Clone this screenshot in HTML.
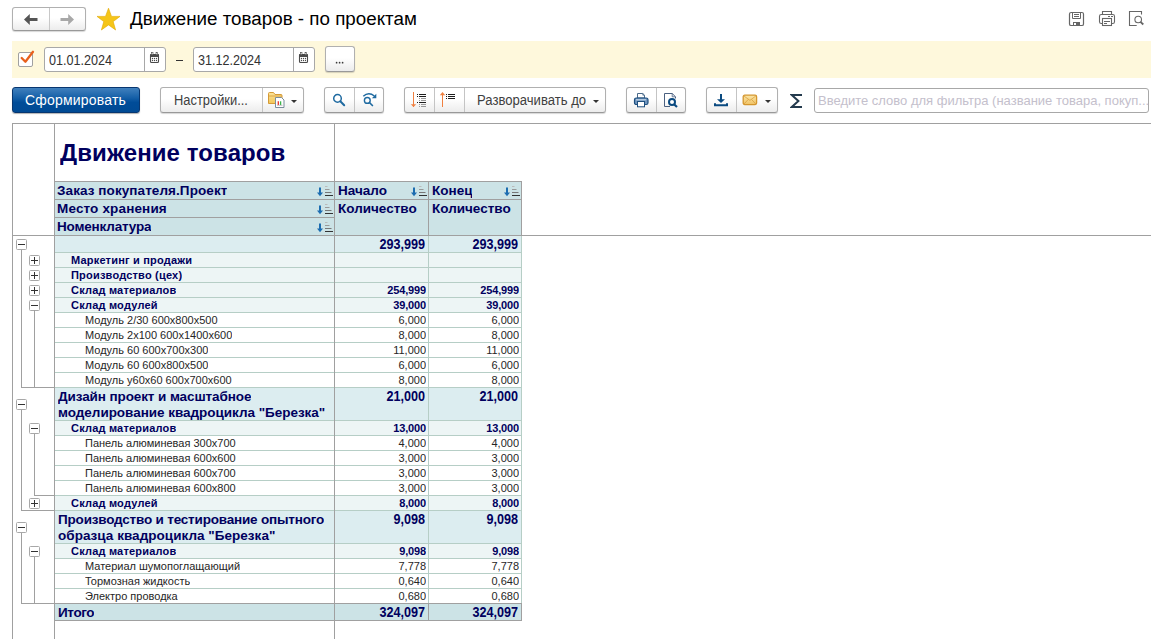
<!DOCTYPE html>
<html><head><meta charset="utf-8">
<style>
*{box-sizing:border-box;margin:0;padding:0}
html,body{width:1151px;height:639px;overflow:hidden;background:#fff;font-family:"Liberation Sans",sans-serif;position:relative}
.a{position:absolute}
.btn{position:absolute;border:1px solid #b0b0b0;border-bottom-color:#999;border-radius:3px;background:linear-gradient(#fff 0%,#fff 45%,#ececec 100%);box-shadow:0 1px 1px rgba(0,0,0,.16)}
.sep{position:absolute;top:0;bottom:0;width:1px;background:#c4c4c4}
.t13{font-size:13px;color:#404040;white-space:nowrap}
.dd{position:absolute;width:0;height:0;border-left:3px solid transparent;border-right:3px solid transparent;border-top:3px solid #333}
/* spreadsheet */
.hl{position:absolute;height:1px}
.vl{position:absolute;width:1px}
.g{background:#a0a0a0}
.gr{background:#b6cec6}
.cell{position:absolute;white-space:nowrap;overflow:hidden}
.hb{font-size:13.5px;font-weight:bold;color:#00005e}
.hb.num{font-size:14.5px;transform:scaleX(.87);transform-origin:100% 50%}
.l1{font-size:11px;font-weight:bold;color:#00005e;letter-spacing:.2px}
.l1.num{letter-spacing:-.15px}
.dt{font-size:11px;color:#262626}
.num{text-align:right}
.box{position:absolute;width:11px;height:11px;border:1px solid #a8a8a8;border-radius:1.5px;background:#fff}
.box:before{content:"";position:absolute;left:1px;top:4px;width:7px;height:1px;background:#333}
.box.p:after{content:"";position:absolute;left:4px;top:1px;width:1px;height:7px;background:#333}
.sorti{position:absolute;width:17px;height:10px}
</style></head><body>

<!-- ===== top bar ===== -->
<div class="btn" style="left:12px;top:7px;width:74px;height:24px"></div>
<div class="a" style="left:49px;top:8px;width:1px;height:22px;background:#c8c8c8"></div>
<svg class="a" style="left:24px;top:14px" width="14" height="11" viewBox="0 0 14 11"><path d="M0 5.5 L5.8 0 V4 H13.5 V7 H5.8 V11 Z" fill="#555"/></svg>
<svg class="a" style="left:60px;top:14px" width="14" height="11" viewBox="0 0 14 11"><path d="M14 5.5 L8.2 0 V4 H0.5 V7 H8.2 V11 Z" fill="#a8a8a8"/></svg>
<svg class="a" style="left:96px;top:7px" width="25" height="24" viewBox="0 0 25 24"><path d="M12.5 1.2 L15.5 9.4 L24 9.4 L17.2 14.6 L19.6 23 L12.5 17.9 L5.4 23 L7.8 14.6 L1 9.4 L9.5 9.4 Z" fill="#f5c518" stroke="#e0a800" stroke-width=".6"/></svg>
<div class="a" style="left:130px;top:7px;font-size:18.8px;color:#000;white-space:nowrap;line-height:24px">Движение товаров - по проектам</div>

<!-- right icons -->
<svg class="a" style="left:1068px;top:11px" width="17" height="16" viewBox="0 0 17 16" fill="none" stroke="#666" stroke-width="1.2">
 <rect x="1.5" y="1.5" width="14" height="13" rx="1.6"/><path d="M4.5 1.5V7.5H12.5V1.5" stroke-width="1"/><path d="M6 3.5H11M6 5.5H11" stroke-width="1"/><rect x="5" y="11" width="7" height="4" fill="#666" stroke="none"/><rect x="6" y="12" width="2" height="2" fill="#fff" stroke="none"/>
</svg>
<svg class="a" style="left:1098px;top:10px" width="18" height="17" viewBox="0 0 18 17" fill="none" stroke="#666" stroke-width="1.1">
 <path d="M4.5 4.5V1.5H13.5V4.5"/><rect x="1.5" y="4.5" width="15" height="9" rx="1.8"/><rect x="4.5" y="8.5" width="9" height="7" fill="#fff"/><path d="M6 11.5H12M6 13.5H9M10 6.5H12M13 6.5H15" stroke-width="1"/>
</svg>
<svg class="a" style="left:1128px;top:10px" width="18" height="17" viewBox="0 0 18 17" fill="none" stroke="#666" stroke-width="1.1">
 <path d="M8.7 15.5H1.5V1.5H13.5V4.5"/><circle cx="10.2" cy="9.5" r="3.3"/><path d="M12.5 11.8L15.3 14.5" stroke-width="1.8"/>
</svg>

<!-- ===== yellow filter band ===== -->
<div class="a" style="left:12px;top:41px;width:1139px;height:37px;background:#fef8dc"></div>
<div class="a" style="left:18px;top:52px;width:15px;height:15px;border:1px solid #a0a0a0;border-radius:2px;background:#fff"></div>
<svg class="a" style="left:19px;top:50px" width="16" height="14" viewBox="0 0 16 14"><path d="M2.7 8 L6.4 11.8 L14 1.8" fill="none" stroke="#e8601c" stroke-width="2.3" stroke-linecap="round" stroke-linejoin="round"/></svg>

<div class="a" style="left:44px;top:47px;width:122px;height:25px;border:1px solid #a8a8a8;border-radius:3px;background:#fff"></div>
<div class="a t13" style="left:49px;top:51.5px;color:#333;line-height:16px;font-size:14px;transform:scaleX(.9);transform-origin:0 50%">01.01.2024</div>
<div class="a" style="left:144px;top:48px;width:1px;height:23px;background:#a8a8a8"></div>
<svg class="a cal" style="left:149px;top:52px" width="12" height="12" viewBox="0 0 12 12"><rect x="1.5" y="2.5" width="8" height="8" rx="1" fill="none" stroke="#4a4a4a" stroke-width="1.1"/><rect x="1" y="2.2" width="9" height="2.8" fill="#4a4a4a"/><rect x="2.6" y="0.6" width="1.4" height="2" fill="#fff" stroke="#4a4a4a" stroke-width=".6"/><rect x="7" y="0.6" width="1.4" height="2" fill="#fff" stroke="#4a4a4a" stroke-width=".6"/><g fill="#4a4a4a"><circle cx="3.5" cy="6.5" r=".65"/><circle cx="5.5" cy="6.5" r=".65"/><circle cx="7.5" cy="6.5" r=".65"/><circle cx="3.5" cy="8.5" r=".65"/><circle cx="5.5" cy="8.5" r=".65"/><circle cx="7.5" cy="8.5" r=".65"/></g></svg>
<div class="a" style="left:176px;top:60px;width:7px;height:1px;background:#333"></div>
<div class="a" style="left:193px;top:47px;width:122px;height:25px;border:1px solid #a8a8a8;border-radius:3px;background:#fff"></div>
<div class="a t13" style="left:198px;top:51.5px;color:#333;line-height:16px;font-size:14px;transform:scaleX(.9);transform-origin:0 50%">31.12.2024</div>
<div class="a" style="left:293px;top:48px;width:1px;height:23px;background:#a8a8a8"></div>
<svg class="a cal" style="left:298px;top:52px" width="12" height="12" viewBox="0 0 12 12"><rect x="1.5" y="2.5" width="8" height="8" rx="1" fill="none" stroke="#4a4a4a" stroke-width="1.1"/><rect x="1" y="2.2" width="9" height="2.8" fill="#4a4a4a"/><rect x="2.6" y="0.6" width="1.4" height="2" fill="#fff" stroke="#4a4a4a" stroke-width=".6"/><rect x="7" y="0.6" width="1.4" height="2" fill="#fff" stroke="#4a4a4a" stroke-width=".6"/><g fill="#4a4a4a"><circle cx="3.5" cy="6.5" r=".65"/><circle cx="5.5" cy="6.5" r=".65"/><circle cx="7.5" cy="6.5" r=".65"/><circle cx="3.5" cy="8.5" r=".65"/><circle cx="5.5" cy="8.5" r=".65"/><circle cx="7.5" cy="8.5" r=".65"/></g></svg>
<div class="btn" style="left:325px;top:46px;width:30px;height:26px"></div>
<svg class="a" style="left:334px;top:60px" width="12" height="5" viewBox="0 0 12 5"><g fill="#3a3a3a"><circle cx="2.6" cy="2.7" r=".85"/><circle cx="5.6" cy="2.7" r=".85"/><circle cx="8.6" cy="2.7" r=".85"/></g></svg>

<!-- ===== toolbar ===== -->
<div class="a" style="left:12px;top:87px;width:128px;height:26px;border:1px solid #073670;border-radius:3px;background:linear-gradient(#4080bd 0%,#1660a8 40%,#004c98 60%,#004a94 100%);box-shadow:0 1px 1px rgba(0,0,0,.3)"></div>
<div class="a" style="left:25px;top:92px;font-size:14px;color:#fff;white-space:nowrap;line-height:16px;letter-spacing:.2px">Сформировать</div>

<div class="btn" style="left:160px;top:87px;width:144px;height:26px"></div>
<div class="a t13" style="left:174px;top:92px;line-height:16px;font-size:14px;transform:scaleX(.92);transform-origin:0 50%">Настройки...</div>
<div class="a" style="left:262px;top:88px;width:1px;height:24px;background:#c4c4c4"></div>
<svg class="a" style="left:267px;top:91px" width="19" height="18" viewBox="0 0 19 18"><defs><linearGradient id="fg" x1="0" y1="0" x2="0" y2="1"><stop offset="0" stop-color="#fbe39a"/><stop offset="1" stop-color="#f2c75a"/></linearGradient></defs><path d="M1.5 12.5V2.5Q1.5 1.5 2.5 1.5H6.5L8 3.5H14Q15 3.5 15 4.5V12.5Z" fill="url(#fg)" stroke="#d59a36" stroke-width="1"/><path d="M1.5 5H15" stroke="#d59a36" stroke-width=".8"/><path d="M8.5 6.5H14.5L17 9V16.5H8.5Z" fill="#fff" stroke="#7b8c9c" stroke-width="1"/><path d="M11.3 14V10.3M13.6 14V10.3" stroke-width="1.4"/><path d="M11.3 14V10.3" stroke="#e8302a" stroke-width="1.3"/><path d="M13.6 14V10.3" stroke="#39b54a" stroke-width="1.3"/><path d="M10 14.3H15.5" stroke="#999" stroke-width=".6"/></svg>
<div class="dd" style="left:291px;top:100px"></div>

<div class="btn" style="left:324px;top:87px;width:60px;height:26px"></div>
<div class="a" style="left:354px;top:88px;width:1px;height:24px;background:#c4c4c4"></div>
<svg class="a" style="left:332px;top:93px" width="14" height="14" viewBox="0 0 14 14"><circle cx="5.5" cy="5.4" r="3.8" fill="none" stroke="#1f6aa0" stroke-width="1.5"/><path d="M8.3 8.3 L12.2 12.2" stroke="#1f6aa0" stroke-width="2" stroke-linecap="round"/></svg>
<svg class="a" style="left:362px;top:92px" width="16" height="15" viewBox="0 0 16 15"><path d="M1.3 4.3 Q6.5 -0.6 12.4 4" fill="none" stroke="#1f6aa0" stroke-width="1.5"/><path d="M14.3 1.8 L14.3 6.3 L9.9 6.3 Z" fill="#1f6aa0"/><circle cx="5.3" cy="8.4" r="2.9" fill="none" stroke="#1f6aa0" stroke-width="1.4"/><path d="M7.4 10.5 L10.4 13.5" stroke="#1f6aa0" stroke-width="1.7" stroke-linecap="round"/></svg>

<div class="btn" style="left:404px;top:87px;width:202px;height:26px"></div>
<div class="a" style="left:434px;top:88px;width:1px;height:24px;background:#c4c4c4"></div>
<div class="a" style="left:464px;top:88px;width:1px;height:24px;background:#c4c4c4"></div>
<svg class="a" style="left:404px;top:87px" width="60" height="26" viewBox="0 0 60 26" shape-rendering="crispEdges">
 <rect x="9" y="5" width="1" height="15" fill="#f08040"/><path d="M6.8 17.2H12.2L9.5 20Z" fill="#f08040" shape-rendering="geometricPrecision"/>
 <g fill="#1e1e1e"><rect x="13" y="7" width="1" height="1"/><rect x="15" y="7" width="7" height="1"/><rect x="13" y="9" width="1" height="1"/><rect x="15" y="9" width="7" height="1"/><rect x="13" y="15" width="1" height="1"/><rect x="15" y="15" width="7" height="1"/></g>
 <g fill="#9a9a9a"><rect x="15" y="11" width="1" height="1"/><rect x="17" y="11" width="5" height="1"/><rect x="15" y="13" width="1" height="1"/><rect x="17" y="13" width="5" height="1"/><rect x="15" y="17" width="1" height="1"/><rect x="17" y="17" width="5" height="1"/><rect x="15" y="19" width="1" height="1"/><rect x="17" y="19" width="5" height="1"/></g>
 <rect x="38" y="7" width="1" height="13" fill="#f08040"/><path d="M35.8 8.2H41.2L38.5 5Z" fill="#f08040" shape-rendering="geometricPrecision"/>
 <g fill="#1e1e1e"><rect x="42" y="7" width="1" height="1"/><rect x="44" y="7" width="7" height="1"/><rect x="42" y="9" width="1" height="1"/><rect x="44" y="9" width="7" height="1"/><rect x="42" y="11" width="1" height="1"/><rect x="44" y="11" width="7" height="1"/></g>
</svg>
<div class="a t13" style="left:477px;top:92px;line-height:16px;font-size:14px;transform:scaleX(.935);transform-origin:0 50%">Разворачивать до</div>
<div class="dd" style="left:593px;top:100px"></div>

<div class="btn" style="left:626px;top:87px;width:60px;height:26px"></div>
<div class="a" style="left:656px;top:88px;width:1px;height:24px;background:#c4c4c4"></div>
<svg class="a" style="left:633px;top:92px" width="16" height="16" viewBox="0 0 16 16"><path d="M4.5 1.5H9.8L11.5 3.2V6H4.5Z" fill="#fff" stroke="#4a6a8a" stroke-width="1"/><path d="M9.8 1.5V3.2H11.5" fill="none" stroke="#4a6a8a" stroke-width=".8"/><rect x="1.5" y="6" width="13.5" height="6.5" rx="1.8" fill="#6f94bd" stroke="#1e4f7e" stroke-width="1.2"/><path d="M3 7.8H13" stroke="#d8e6f2" stroke-width=".9"/><rect x="4.5" y="9.5" width="7" height="5.3" fill="#fff" stroke="#1e4f7e" stroke-width="1"/></svg>
<svg class="a" style="left:663px;top:92px" width="16" height="17" viewBox="0 0 16 17"><path d="M7 14.5H1.5V1.5H9.2L12.5 4.8V6.5" fill="none" stroke="#4a6080" stroke-width="1"/><path d="M9.2 1.5V4.8H12.5" fill="none" stroke="#4a6080" stroke-width=".8"/><circle cx="9" cy="10" r="3" fill="#fff" stroke="#0a4a80" stroke-width="2"/><path d="M11 12.2L14 15" stroke="#0a4a80" stroke-width="2.2"/></svg>

<div class="btn" style="left:706px;top:87px;width:72px;height:26px"></div>
<div class="a" style="left:736px;top:88px;width:1px;height:24px;background:#c4c4c4"></div>
<svg class="a" style="left:713px;top:93px" width="16" height="14" viewBox="0 0 16 14"><rect x="7" y="1" width="2" height="6" fill="#0a4a80"/><path d="M4 6.2H12L8 9.9Z" fill="#0a4a80"/><path d="M2 10.2V12.3H14V10.2" fill="none" stroke="#0a4a80" stroke-width="2"/></svg>
<svg class="a" style="left:742px;top:94px" width="16" height="12" viewBox="0 0 16 12"><defs><linearGradient id="eg" x1="0" y1="0" x2="0" y2="1"><stop offset="0" stop-color="#fbe6a6"/><stop offset="1" stop-color="#f0c264"/></linearGradient></defs><rect x="1.2" y="1.2" width="13.4" height="9.4" rx="1.5" fill="url(#eg)" stroke="#d4962e" stroke-width="1.3"/><path d="M2 2 L7.9 6.4 L13.8 2M2 10L6.2 5.5M13.8 10L9.6 5.5" fill="none" stroke="#d9a040" stroke-width=".8"/></svg>
<div class="dd" style="left:765px;top:100px"></div>

<svg class="a" style="left:790px;top:93px" width="13" height="16" viewBox="0 0 13 16"><path d="M12 2H1.8L8.4 8L1.8 14H12" fill="none" stroke="#243a4d" stroke-width="2" stroke-linejoin="miter" stroke-miterlimit="10"/></svg>

<div class="a" style="left:814px;top:88px;width:335px;height:25px;border:1px solid #a8a8a8;border-radius:3px;background:#fff"></div>
<div class="a t13" style="left:818px;top:93px;color:#c4c0cc;line-height:16px">Введите слово для фильтра (название товара, покуп...</div>

<!-- ===== spreadsheet ===== -->
<div id="sheet">
<div class="a g" style="left:12px;top:123px;width:1139px;height:1px"></div>
<div class="a g" style="left:12px;top:123px;width:1px;height:516px"></div>
<div class="a g" style="left:54px;top:123px;width:1px;height:516px"></div>
<div class="a g" style="left:334px;top:123px;width:1px;height:516px"></div>
<div class="a g" style="left:12px;top:235px;width:1139px;height:1px"></div>
<div class="cell hb" style="left:60px;top:141px;font-size:24px;line-height:24px;letter-spacing:.1px">Движение товаров</div>
<div class="a" style="left:54px;top:181px;width:281px;height:19px;background:#cce3e6;border:1px solid #a0a0a0"></div>
<div class="cell hb" style="left:57px;top:183px;line-height:16px;letter-spacing:0.08px">Заказ покупателя.Проект</div>
<svg class="a" style="left:317px;top:186px" width="16" height="11" viewBox="0 0 16 11"><path d="M3 1.5V8" stroke="#1c6db0" stroke-width="2"/><path d="M0 6.5L3 10.3L6 6.5Z" fill="#1c6db0"/><path d="M8 0.5h2.5" stroke="#bbb"/><path d="M8 3.5h4.5" stroke="#999"/><path d="M8 6.5h6.5" stroke="#777"/><path d="M8 9.5h8" stroke="#333"/></svg>
<div class="a" style="left:54px;top:199px;width:281px;height:19px;background:#cce3e6;border:1px solid #a0a0a0"></div>
<div class="cell hb" style="left:57px;top:201px;line-height:16px;letter-spacing:0.15px">Место хранения</div>
<svg class="a" style="left:317px;top:204px" width="16" height="11" viewBox="0 0 16 11"><path d="M3 1.5V8" stroke="#1c6db0" stroke-width="2"/><path d="M0 6.5L3 10.3L6 6.5Z" fill="#1c6db0"/><path d="M8 0.5h2.5" stroke="#bbb"/><path d="M8 3.5h4.5" stroke="#999"/><path d="M8 6.5h6.5" stroke="#777"/><path d="M8 9.5h8" stroke="#333"/></svg>
<div class="a" style="left:54px;top:217px;width:281px;height:19px;background:#cce3e6;border:1px solid #a0a0a0"></div>
<div class="cell hb" style="left:57px;top:219px;line-height:16px;letter-spacing:-0.18px">Номенклатура</div>
<svg class="a" style="left:317px;top:222px" width="16" height="11" viewBox="0 0 16 11"><path d="M3 1.5V8" stroke="#1c6db0" stroke-width="2"/><path d="M0 6.5L3 10.3L6 6.5Z" fill="#1c6db0"/><path d="M8 0.5h2.5" stroke="#bbb"/><path d="M8 3.5h4.5" stroke="#999"/><path d="M8 6.5h6.5" stroke="#777"/><path d="M8 9.5h8" stroke="#333"/></svg>
<div class="a" style="left:334px;top:181px;width:95px;height:19px;background:#cce3e6;border:1px solid #a0a0a0"></div>
<div class="cell hb" style="left:338px;top:183px;line-height:16px;letter-spacing:0px">Начало</div>
<svg class="a" style="left:411px;top:186px" width="16" height="11" viewBox="0 0 16 11"><path d="M3 1.5V8" stroke="#1c6db0" stroke-width="2"/><path d="M0 6.5L3 10.3L6 6.5Z" fill="#1c6db0"/><path d="M8 0.5h2.5" stroke="#bbb"/><path d="M8 3.5h4.5" stroke="#999"/><path d="M8 6.5h6.5" stroke="#777"/><path d="M8 9.5h8" stroke="#333"/></svg>
<div class="a" style="left:428px;top:181px;width:94px;height:19px;background:#cce3e6;border:1px solid #a0a0a0"></div>
<div class="cell hb" style="left:432px;top:183px;line-height:16px;letter-spacing:0px">Конец</div>
<svg class="a" style="left:504px;top:186px" width="16" height="11" viewBox="0 0 16 11"><path d="M3 1.5V8" stroke="#1c6db0" stroke-width="2"/><path d="M0 6.5L3 10.3L6 6.5Z" fill="#1c6db0"/><path d="M8 0.5h2.5" stroke="#bbb"/><path d="M8 3.5h4.5" stroke="#999"/><path d="M8 6.5h6.5" stroke="#777"/><path d="M8 9.5h8" stroke="#333"/></svg>
<div class="a" style="left:334px;top:199px;width:95px;height:37px;background:#cce3e6;border:1px solid #a0a0a0"></div>
<div class="cell hb" style="left:338px;top:201px;line-height:16px;letter-spacing:0px">Количество</div>
<div class="a" style="left:428px;top:199px;width:94px;height:37px;background:#cce3e6;border:1px solid #a0a0a0"></div>
<div class="cell hb" style="left:432px;top:201px;line-height:16px;letter-spacing:0px">Количество</div>
<div class="a" style="left:54px;top:235px;width:281px;height:18px;background:#dcedf0;border:1px solid #b6cec6"></div>
<div class="a" style="left:334px;top:235px;width:95px;height:18px;background:#dcedf0;border:1px solid #b6cec6"></div>
<div class="a" style="left:428px;top:235px;width:94px;height:18px;background:#dcedf0;border:1px solid #b6cec6"></div>
<div class="cell hb num" style="left:334px;top:236px;width:91px;line-height:16px">293,999</div>
<div class="cell hb num" style="left:428px;top:236px;width:90px;line-height:16px">293,999</div>
<div class="a" style="left:54px;top:252px;width:281px;height:16px;background:#edf5f5;border:1px solid #b6cec6"></div>
<div class="a" style="left:334px;top:252px;width:95px;height:16px;background:#edf5f5;border:1px solid #b6cec6"></div>
<div class="a" style="left:428px;top:252px;width:94px;height:16px;background:#edf5f5;border:1px solid #b6cec6"></div>
<div class="cell l1" style="left:71px;top:254px;line-height:13px">Маркетинг и продажи</div>
<div class="cell l1 num" style="left:334px;top:254px;width:92px;line-height:13px"></div>
<div class="cell l1 num" style="left:428px;top:254px;width:91px;line-height:13px"></div>
<div class="a" style="left:54px;top:267px;width:281px;height:16px;background:#edf5f5;border:1px solid #b6cec6"></div>
<div class="a" style="left:334px;top:267px;width:95px;height:16px;background:#edf5f5;border:1px solid #b6cec6"></div>
<div class="a" style="left:428px;top:267px;width:94px;height:16px;background:#edf5f5;border:1px solid #b6cec6"></div>
<div class="cell l1" style="left:71px;top:269px;line-height:13px">Производство (цех)</div>
<div class="cell l1 num" style="left:334px;top:269px;width:92px;line-height:13px"></div>
<div class="cell l1 num" style="left:428px;top:269px;width:91px;line-height:13px"></div>
<div class="a" style="left:54px;top:282px;width:281px;height:16px;background:#edf5f5;border:1px solid #b6cec6"></div>
<div class="a" style="left:334px;top:282px;width:95px;height:16px;background:#edf5f5;border:1px solid #b6cec6"></div>
<div class="a" style="left:428px;top:282px;width:94px;height:16px;background:#edf5f5;border:1px solid #b6cec6"></div>
<div class="cell l1" style="left:71px;top:284px;line-height:13px">Склад материалов</div>
<div class="cell l1 num" style="left:334px;top:284px;width:92px;line-height:13px">254,999</div>
<div class="cell l1 num" style="left:428px;top:284px;width:91px;line-height:13px">254,999</div>
<div class="a" style="left:54px;top:297px;width:281px;height:16px;background:#edf5f5;border:1px solid #b6cec6"></div>
<div class="a" style="left:334px;top:297px;width:95px;height:16px;background:#edf5f5;border:1px solid #b6cec6"></div>
<div class="a" style="left:428px;top:297px;width:94px;height:16px;background:#edf5f5;border:1px solid #b6cec6"></div>
<div class="cell l1" style="left:71px;top:299px;line-height:13px">Склад модулей</div>
<div class="cell l1 num" style="left:334px;top:299px;width:92px;line-height:13px">39,000</div>
<div class="cell l1 num" style="left:428px;top:299px;width:91px;line-height:13px">39,000</div>
<div class="a" style="left:54px;top:312px;width:281px;height:16px;background:#fff;border:1px solid #b6cec6"></div>
<div class="a" style="left:334px;top:312px;width:95px;height:16px;background:#fff;border:1px solid #b6cec6"></div>
<div class="a" style="left:428px;top:312px;width:94px;height:16px;background:#fff;border:1px solid #b6cec6"></div>
<div class="cell dt" style="left:85px;top:314px;line-height:13px">Модуль 2/30 600x800x500</div>
<div class="cell dt num" style="left:334px;top:314px;width:92px;line-height:13px">6,000</div>
<div class="cell dt num" style="left:428px;top:314px;width:91px;line-height:13px">6,000</div>
<div class="a" style="left:54px;top:327px;width:281px;height:16px;background:#fff;border:1px solid #b6cec6"></div>
<div class="a" style="left:334px;top:327px;width:95px;height:16px;background:#fff;border:1px solid #b6cec6"></div>
<div class="a" style="left:428px;top:327px;width:94px;height:16px;background:#fff;border:1px solid #b6cec6"></div>
<div class="cell dt" style="left:85px;top:329px;line-height:13px">Модуль 2x100 600x1400x600</div>
<div class="cell dt num" style="left:334px;top:329px;width:92px;line-height:13px">8,000</div>
<div class="cell dt num" style="left:428px;top:329px;width:91px;line-height:13px">8,000</div>
<div class="a" style="left:54px;top:342px;width:281px;height:16px;background:#fff;border:1px solid #b6cec6"></div>
<div class="a" style="left:334px;top:342px;width:95px;height:16px;background:#fff;border:1px solid #b6cec6"></div>
<div class="a" style="left:428px;top:342px;width:94px;height:16px;background:#fff;border:1px solid #b6cec6"></div>
<div class="cell dt" style="left:85px;top:344px;line-height:13px">Модуль 60 600x700x300</div>
<div class="cell dt num" style="left:334px;top:344px;width:92px;line-height:13px">11,000</div>
<div class="cell dt num" style="left:428px;top:344px;width:91px;line-height:13px">11,000</div>
<div class="a" style="left:54px;top:357px;width:281px;height:16px;background:#fff;border:1px solid #b6cec6"></div>
<div class="a" style="left:334px;top:357px;width:95px;height:16px;background:#fff;border:1px solid #b6cec6"></div>
<div class="a" style="left:428px;top:357px;width:94px;height:16px;background:#fff;border:1px solid #b6cec6"></div>
<div class="cell dt" style="left:85px;top:359px;line-height:13px">Модуль 60 600x800x500</div>
<div class="cell dt num" style="left:334px;top:359px;width:92px;line-height:13px">6,000</div>
<div class="cell dt num" style="left:428px;top:359px;width:91px;line-height:13px">6,000</div>
<div class="a" style="left:54px;top:372px;width:281px;height:16px;background:#fff;border:1px solid #b6cec6"></div>
<div class="a" style="left:334px;top:372px;width:95px;height:16px;background:#fff;border:1px solid #b6cec6"></div>
<div class="a" style="left:428px;top:372px;width:94px;height:16px;background:#fff;border:1px solid #b6cec6"></div>
<div class="cell dt" style="left:85px;top:374px;line-height:13px">Модуль у60х60 600х700х600</div>
<div class="cell dt num" style="left:334px;top:374px;width:92px;line-height:13px">8,000</div>
<div class="cell dt num" style="left:428px;top:374px;width:91px;line-height:13px">8,000</div>
<div class="a" style="left:54px;top:387px;width:281px;height:34px;background:#dcedf0;border:1px solid #b6cec6"></div>
<div class="a" style="left:334px;top:387px;width:95px;height:34px;background:#dcedf0;border:1px solid #b6cec6"></div>
<div class="a" style="left:428px;top:387px;width:94px;height:34px;background:#dcedf0;border:1px solid #b6cec6"></div>
<div class="cell hb" style="left:58px;top:389px;line-height:16px;letter-spacing:-0.1px">Дизайн проект и масштабное</div>
<div class="cell hb" style="left:58px;top:405px;line-height:16px;letter-spacing:-0.03px">моделирование квадроцикла "Березка"</div>
<div class="cell hb num" style="left:334px;top:388px;width:91px;line-height:16px">21,000</div>
<div class="cell hb num" style="left:428px;top:388px;width:90px;line-height:16px">21,000</div>
<div class="a" style="left:54px;top:420px;width:281px;height:16px;background:#edf5f5;border:1px solid #b6cec6"></div>
<div class="a" style="left:334px;top:420px;width:95px;height:16px;background:#edf5f5;border:1px solid #b6cec6"></div>
<div class="a" style="left:428px;top:420px;width:94px;height:16px;background:#edf5f5;border:1px solid #b6cec6"></div>
<div class="cell l1" style="left:71px;top:422px;line-height:13px">Склад материалов</div>
<div class="cell l1 num" style="left:334px;top:422px;width:92px;line-height:13px">13,000</div>
<div class="cell l1 num" style="left:428px;top:422px;width:91px;line-height:13px">13,000</div>
<div class="a" style="left:54px;top:435px;width:281px;height:16px;background:#fff;border:1px solid #b6cec6"></div>
<div class="a" style="left:334px;top:435px;width:95px;height:16px;background:#fff;border:1px solid #b6cec6"></div>
<div class="a" style="left:428px;top:435px;width:94px;height:16px;background:#fff;border:1px solid #b6cec6"></div>
<div class="cell dt" style="left:85px;top:437px;line-height:13px">Панель алюминевая 300x700</div>
<div class="cell dt num" style="left:334px;top:437px;width:92px;line-height:13px">4,000</div>
<div class="cell dt num" style="left:428px;top:437px;width:91px;line-height:13px">4,000</div>
<div class="a" style="left:54px;top:450px;width:281px;height:16px;background:#fff;border:1px solid #b6cec6"></div>
<div class="a" style="left:334px;top:450px;width:95px;height:16px;background:#fff;border:1px solid #b6cec6"></div>
<div class="a" style="left:428px;top:450px;width:94px;height:16px;background:#fff;border:1px solid #b6cec6"></div>
<div class="cell dt" style="left:85px;top:452px;line-height:13px">Панель алюминевая 600x600</div>
<div class="cell dt num" style="left:334px;top:452px;width:92px;line-height:13px">3,000</div>
<div class="cell dt num" style="left:428px;top:452px;width:91px;line-height:13px">3,000</div>
<div class="a" style="left:54px;top:465px;width:281px;height:16px;background:#fff;border:1px solid #b6cec6"></div>
<div class="a" style="left:334px;top:465px;width:95px;height:16px;background:#fff;border:1px solid #b6cec6"></div>
<div class="a" style="left:428px;top:465px;width:94px;height:16px;background:#fff;border:1px solid #b6cec6"></div>
<div class="cell dt" style="left:85px;top:467px;line-height:13px">Панель алюминевая 600x700</div>
<div class="cell dt num" style="left:334px;top:467px;width:92px;line-height:13px">3,000</div>
<div class="cell dt num" style="left:428px;top:467px;width:91px;line-height:13px">3,000</div>
<div class="a" style="left:54px;top:480px;width:281px;height:16px;background:#fff;border:1px solid #b6cec6"></div>
<div class="a" style="left:334px;top:480px;width:95px;height:16px;background:#fff;border:1px solid #b6cec6"></div>
<div class="a" style="left:428px;top:480px;width:94px;height:16px;background:#fff;border:1px solid #b6cec6"></div>
<div class="cell dt" style="left:85px;top:482px;line-height:13px">Панель алюминевая 600x800</div>
<div class="cell dt num" style="left:334px;top:482px;width:92px;line-height:13px">3,000</div>
<div class="cell dt num" style="left:428px;top:482px;width:91px;line-height:13px">3,000</div>
<div class="a" style="left:54px;top:495px;width:281px;height:16px;background:#edf5f5;border:1px solid #b6cec6"></div>
<div class="a" style="left:334px;top:495px;width:95px;height:16px;background:#edf5f5;border:1px solid #b6cec6"></div>
<div class="a" style="left:428px;top:495px;width:94px;height:16px;background:#edf5f5;border:1px solid #b6cec6"></div>
<div class="cell l1" style="left:71px;top:497px;line-height:13px">Склад модулей</div>
<div class="cell l1 num" style="left:334px;top:497px;width:92px;line-height:13px">8,000</div>
<div class="cell l1 num" style="left:428px;top:497px;width:91px;line-height:13px">8,000</div>
<div class="a" style="left:54px;top:510px;width:281px;height:34px;background:#dcedf0;border:1px solid #b6cec6"></div>
<div class="a" style="left:334px;top:510px;width:95px;height:34px;background:#dcedf0;border:1px solid #b6cec6"></div>
<div class="a" style="left:428px;top:510px;width:94px;height:34px;background:#dcedf0;border:1px solid #b6cec6"></div>
<div class="cell hb" style="left:58px;top:512px;line-height:16px;letter-spacing:-0.19px">Производство и тестирование опытного</div>
<div class="cell hb" style="left:58px;top:528px;line-height:16px;letter-spacing:0.03px">образца квадроцикла "Березка"</div>
<div class="cell hb num" style="left:334px;top:511px;width:91px;line-height:16px">9,098</div>
<div class="cell hb num" style="left:428px;top:511px;width:90px;line-height:16px">9,098</div>
<div class="a" style="left:54px;top:543px;width:281px;height:16px;background:#edf5f5;border:1px solid #b6cec6"></div>
<div class="a" style="left:334px;top:543px;width:95px;height:16px;background:#edf5f5;border:1px solid #b6cec6"></div>
<div class="a" style="left:428px;top:543px;width:94px;height:16px;background:#edf5f5;border:1px solid #b6cec6"></div>
<div class="cell l1" style="left:71px;top:545px;line-height:13px">Склад материалов</div>
<div class="cell l1 num" style="left:334px;top:545px;width:92px;line-height:13px">9,098</div>
<div class="cell l1 num" style="left:428px;top:545px;width:91px;line-height:13px">9,098</div>
<div class="a" style="left:54px;top:558px;width:281px;height:16px;background:#fff;border:1px solid #b6cec6"></div>
<div class="a" style="left:334px;top:558px;width:95px;height:16px;background:#fff;border:1px solid #b6cec6"></div>
<div class="a" style="left:428px;top:558px;width:94px;height:16px;background:#fff;border:1px solid #b6cec6"></div>
<div class="cell dt" style="left:85px;top:560px;line-height:13px">Материал шумопоглащающий</div>
<div class="cell dt num" style="left:334px;top:560px;width:92px;line-height:13px">7,778</div>
<div class="cell dt num" style="left:428px;top:560px;width:91px;line-height:13px">7,778</div>
<div class="a" style="left:54px;top:573px;width:281px;height:16px;background:#fff;border:1px solid #b6cec6"></div>
<div class="a" style="left:334px;top:573px;width:95px;height:16px;background:#fff;border:1px solid #b6cec6"></div>
<div class="a" style="left:428px;top:573px;width:94px;height:16px;background:#fff;border:1px solid #b6cec6"></div>
<div class="cell dt" style="left:85px;top:575px;line-height:13px">Тормозная жидкость</div>
<div class="cell dt num" style="left:334px;top:575px;width:92px;line-height:13px">0,640</div>
<div class="cell dt num" style="left:428px;top:575px;width:91px;line-height:13px">0,640</div>
<div class="a" style="left:54px;top:588px;width:281px;height:16px;background:#fff;border:1px solid #b6cec6"></div>
<div class="a" style="left:334px;top:588px;width:95px;height:16px;background:#fff;border:1px solid #b6cec6"></div>
<div class="a" style="left:428px;top:588px;width:94px;height:16px;background:#fff;border:1px solid #b6cec6"></div>
<div class="cell dt" style="left:85px;top:590px;line-height:13px">Электро проводка</div>
<div class="cell dt num" style="left:334px;top:590px;width:92px;line-height:13px">0,680</div>
<div class="cell dt num" style="left:428px;top:590px;width:91px;line-height:13px">0,680</div>
<div class="a" style="left:54px;top:603px;width:281px;height:18px;background:#cce3e6;border:1px solid #a0a0a0"></div>
<div class="a" style="left:334px;top:603px;width:95px;height:18px;background:#cce3e6;border:1px solid #a0a0a0"></div>
<div class="a" style="left:428px;top:603px;width:94px;height:18px;background:#cce3e6;border:1px solid #a0a0a0"></div>
<div class="cell hb" style="left:58px;top:605px;line-height:16px;letter-spacing:-.37px">Итого</div>
<div class="cell hb num" style="left:334px;top:604px;width:91px;line-height:16px">324,097</div>
<div class="cell hb num" style="left:428px;top:604px;width:90px;line-height:16px">324,097</div>
<div class="a g" style="left:12px;top:235px;width:1139px;height:1px"></div>
<div class="a g" style="left:54px;top:123px;width:1px;height:516px"></div>
<div class="a g" style="left:334px;top:123px;width:1px;height:516px"></div>
<div class="a g" style="left:21px;top:250px;width:1px;height:137px"></div>
<div class="a g" style="left:21px;top:387px;width:33px;height:1px"></div>
<div class="box p" style="left:29px;top:255px"></div>
<div class="box p" style="left:29px;top:270px"></div>
<div class="box p" style="left:29px;top:285px"></div>
<div class="box" style="left:29px;top:300px"></div>
<div class="a g" style="left:34px;top:310px;width:1px;height:77px"></div>
<div class="box" style="left:16px;top:239px"></div>
<div class="a g" style="left:21px;top:409px;width:1px;height:101px"></div>
<div class="a g" style="left:21px;top:510px;width:33px;height:1px"></div>
<div class="box" style="left:16px;top:399px"></div>
<div class="box" style="left:29px;top:423px"></div>
<div class="a g" style="left:34px;top:434px;width:1px;height:61px"></div>
<div class="a g" style="left:34px;top:495px;width:20px;height:1px"></div>
<div class="box p" style="left:29px;top:498px"></div>
<div class="a g" style="left:21px;top:532px;width:1px;height:71px"></div>
<div class="a g" style="left:21px;top:603px;width:33px;height:1px"></div>
<div class="box" style="left:16px;top:522px"></div>
<div class="box" style="left:29px;top:546px"></div>
<div class="a g" style="left:34px;top:557px;width:1px;height:46px"></div>
</div>
</body></html>
